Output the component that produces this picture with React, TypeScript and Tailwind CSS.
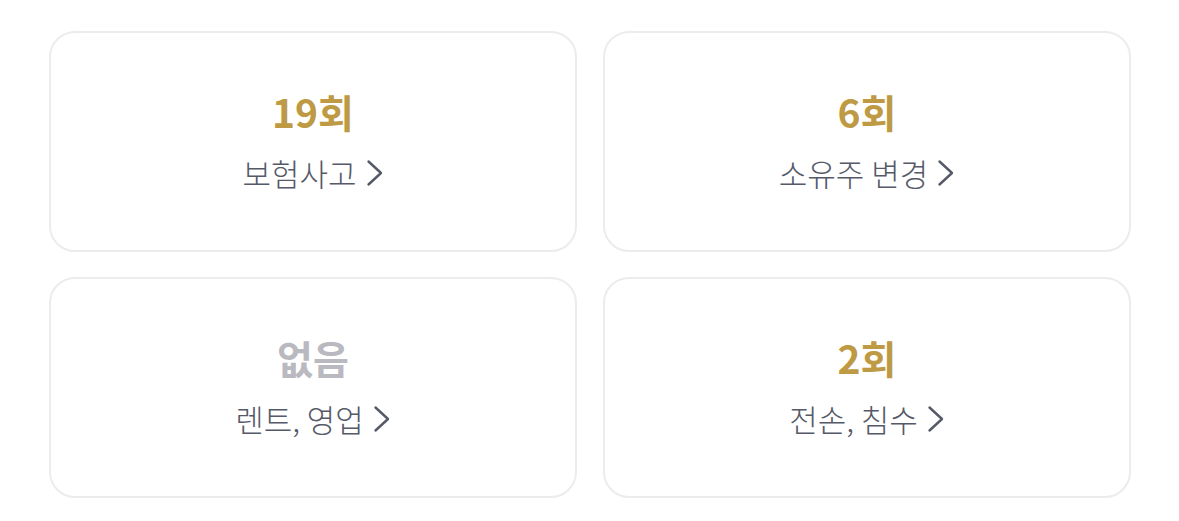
type Stat = {
  value: string;
  label: string;
  empty?: boolean;
};

const stats: Stat[] = [
  { value: '19회', label: '보험사고' },
  { value: '6회', label: '소유주 변경' },
  { value: '없음', label: '렌트, 영업', empty: true },
  { value: '2회', label: '전손, 침수' },
];

function Chevron() {
  return (
    <svg width="18" height="28" viewBox="0 0 18 28" fill="none" className="ml-[9px]">
      <path d="M2.5 2.5 L15 14 L2.5 25.5" stroke="currentColor" strokeWidth="2.4" strokeLinecap="round" strokeLinejoin="round" />
    </svg>
  );
}

function StatCard({ value, label, empty }: Stat) {
  return (
    <div className="h-[221px] rounded-[26px] border-2 border-[#ececee] bg-white flex flex-col items-center justify-center">
      <div
        className={`text-[39px] leading-[44px] font-bold ${empty ? 'text-[#b9b9bf]' : 'text-[#bd9a43]'}`}
      >
        {value}
      </div>
      <div className="mt-[20px] mb-[2px] flex items-center text-[31px] leading-[40px] font-light text-[#555968]">
        <span>{label}</span>
        <Chevron />
      </div>
    </div>
  );
}

export default function App() {
  return (
    <div
      className="w-[1179px] h-[521px] bg-white pt-[31px] pl-[49px] pr-[48px]"
      style={{ fontFamily: '"Noto Sans CJK KR", "Noto Sans", sans-serif' }}
    >
      <div className="grid grid-cols-2 gap-x-[26px] gap-y-[25px]">
        {stats.map((s) => (
          <StatCard key={s.label} {...s} />
        ))}
      </div>
    </div>
  );
}
